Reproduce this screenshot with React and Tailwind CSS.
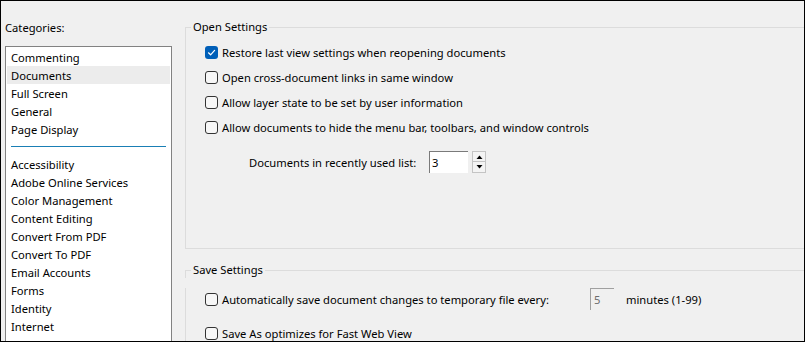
import React from 'react';

const topItems = ['Commenting', 'Documents', 'Full Screen', 'General', 'Page Display'];
const moreItems = [
  'Accessibility',
  'Adobe Online Services',
  'Color Management',
  'Content Editing',
  'Convert From PDF',
  'Convert To PDF',
  'Email Accounts',
  'Forms',
  'Identity',
  'Internet',
  'JavaScript',
];

function Checkbox({ checked }) {
  if (checked) {
    return (
      <span className="w-[13px] h-[13px] rounded-[3px] bg-[#005fb8] flex items-center justify-center shrink-0">
        <svg width="9" height="9" viewBox="0 0 9 9" fill="none">
          <path d="M1.5 4.8 L3.6 6.8 L7.6 2.4" stroke="white" strokeWidth="1.2" strokeLinecap="round" strokeLinejoin="round" />
        </svg>
      </span>
    );
  }
  return <span className="w-[13px] h-[13px] rounded-[3px] border border-[#333] bg-[#f7f7f7] shrink-0" />;
}

function CheckRow({ checked, label, className = 'h-[25px]' }) {
  return (
    <div className={`flex items-center gap-[4px] ${className}`}>
      <Checkbox checked={checked} />
      <span className="pt-[1px]">{label}</span>
    </div>
  );
}

function ListRow({ label, selected }) {
  return (
    <div className={`h-[18px] flex items-center pl-[4px] pt-[1px] ${selected ? 'bg-[#ececec]' : ''}`}>
      {label}
    </div>
  );
}

// group box header: line, caption, line
function GroupHeader({ title }) {
  return (
    <div className="h-[16px] flex">
      <div className="w-[6px] h-[8px] self-end border-t border-l border-[#dcdcdc]" />
      <span className="px-[2px]">{title}</span>
      <div className="flex-1 h-[8px] self-end border-t border-[#dcdcdc]" />
    </div>
  );
}

export default function App() {
  return (
    <div
      className="w-[805px] h-[342px] border border-black bg-[#f0f0f0] overflow-hidden flex text-[11.2px] text-black leading-[16px]"
      style={{ fontFamily: '"Noto Sans", sans-serif' }}
    >
      {/* Categories */}
      <div className="w-[184px] shrink-0 pl-[4px] pt-[18px]">
        <div className="h-[16px] pt-[1px]">Categories:</div>
        <div className="mt-[11px] w-[167px] h-[400px] border border-[#828282] bg-white p-[1px]">
          {topItems.map((item) => (
            <ListRow key={item} label={item} selected={item === 'Documents'} />
          ))}
          <div className="h-[17px] flex items-center px-[4px]">
            <div className="h-[1px] w-full bg-[#1a7fb5]" />
          </div>
          {moreItems.map((item) => (
            <ListRow key={item} label={item} />
          ))}
        </div>
      </div>

      {/* Settings */}
      <div className="flex-1 pt-[18px]">
        <GroupHeader title="Open Settings" />
        <div className="h-[214px] border-l border-b border-[#dcdcdc] pl-[19px] pt-[5px]">
          <CheckRow checked label="Restore last view settings when reopening documents" />
          <CheckRow label="Open cross-document links in same window" />
          <CheckRow label="Allow layer state to be set by user information" />
          <CheckRow label="Allow documents to hide the menu bar, toolbars, and window controls" />
          <div className="mt-[11px] flex items-center h-[22px] pl-[44px]">
            <span className="w-[180px] pt-[1px]">Documents in recently used list:</span>
            <div className="w-[39px] h-[22px] bg-white border-t border-l border-[#7a7a7a] border-r-[#e3e3e3] border-b-[#e3e3e3] pl-[2px] flex items-center">
              3
            </div>
            <div className="ml-[4px] w-[14px] h-[22px] flex flex-col">
              <div className="h-[11px] border border-[#c4c4c4] bg-[#f4f4f4] flex items-center justify-center">
                <svg width="7" height="4" viewBox="0 0 7 4"><path d="M0.5 4 L3.5 0.5 L6.5 4 Z" fill="black" /></svg>
              </div>
              <div className="h-[11px] border border-t-0 border-[#c4c4c4] bg-[#f4f4f4] flex items-center justify-center">
                <svg width="7" height="4" viewBox="0 0 7 4"><path d="M0.5 0 L3.5 3.5 L6.5 0 Z" fill="black" /></svg>
              </div>
            </div>
          </div>
        </div>

        <div className="mt-[13px]">
          <GroupHeader title="Save Settings" />
        </div>
        <div className="h-[120px] border-l border-[#dcdcdc] pl-[19px]">
          <div className="mt-[10px] flex items-center h-[22px]">
            <div className="w-[385px] flex items-center gap-[4px]">
              <Checkbox />
              <span className="pt-[1px]">Automatically save document changes to temporary file every:</span>
            </div>
            <div className="w-[24px] h-[22px] bg-[#f0f0f0] border-t border-l border-[#a0a0a0] border-r-white border-b-white pl-[3px] flex items-center text-[#6d6d6d]">
              5
            </div>
            <span className="ml-[12px] pt-[1px]">minutes (1-99)</span>
          </div>
          <CheckRow label="Save As optimizes for Fast Web View" className="mt-[14px] h-[18px]" />
        </div>
      </div>
    </div>
  );
}
